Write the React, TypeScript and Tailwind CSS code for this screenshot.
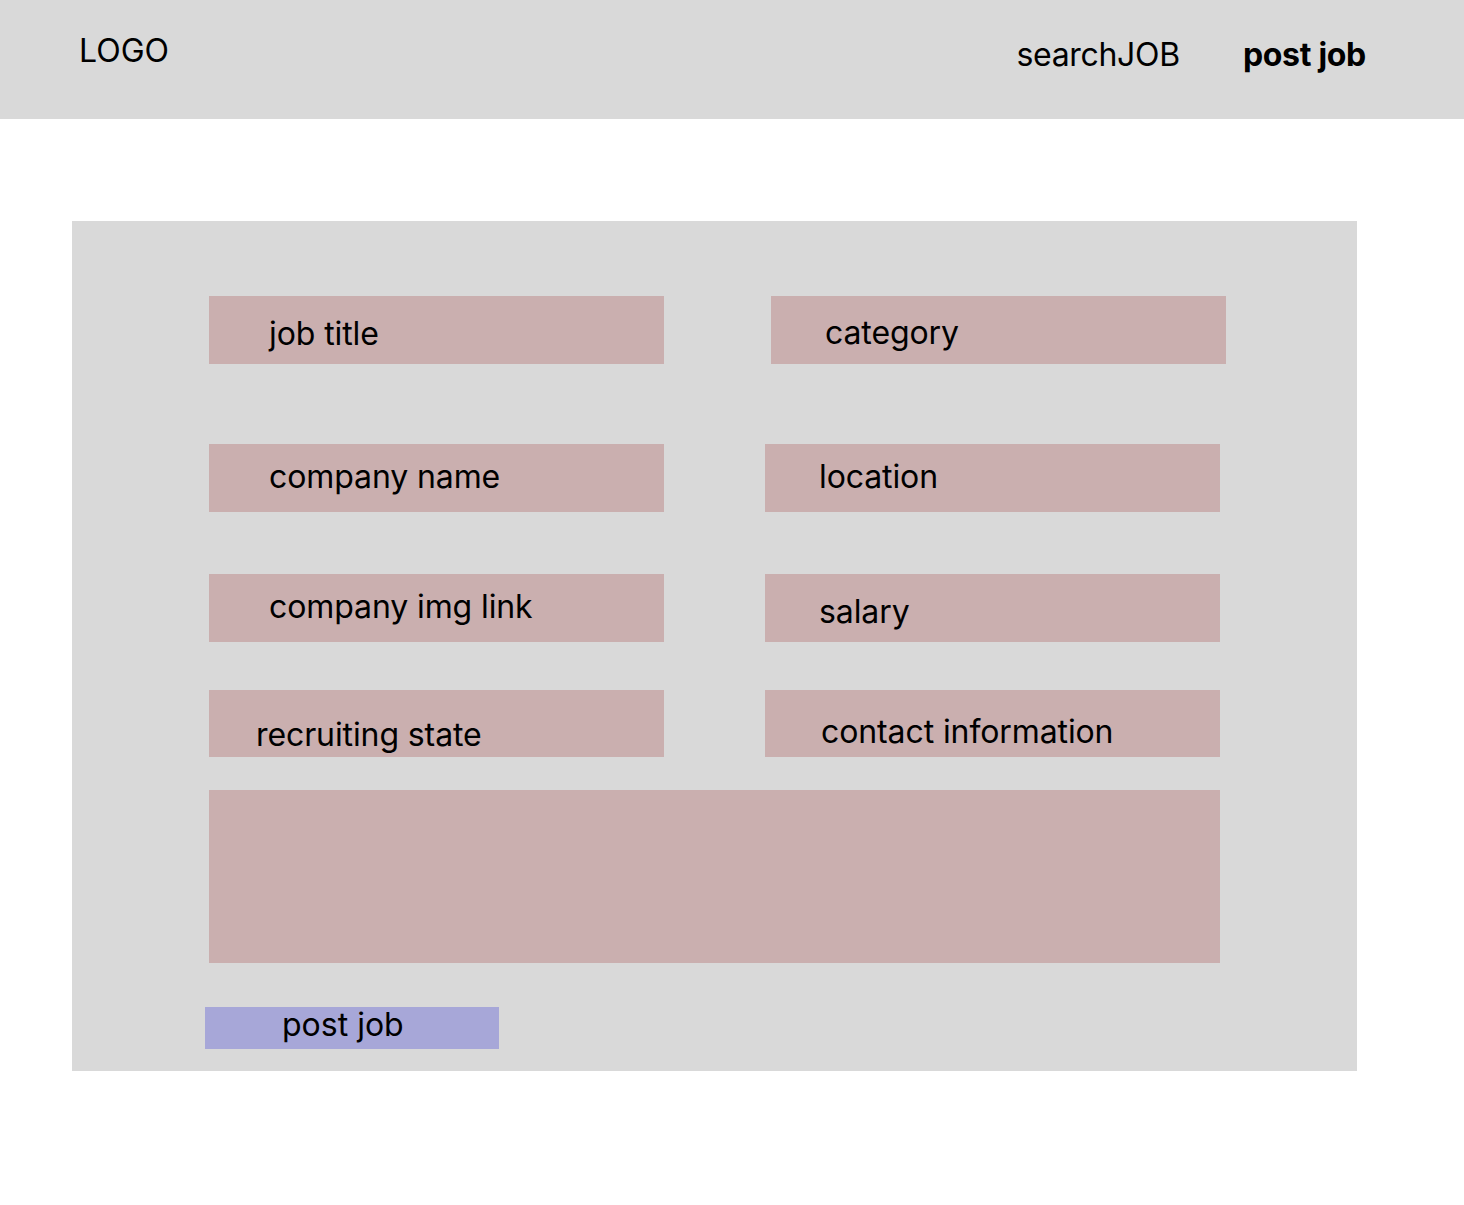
const font = { fontFamily: "Inter, 'Noto Sans', sans-serif" };

function Field({ label, className, textClass }: { label: string; className: string; textClass: string }) {
  return (
    <div className={`bg-[#caafaf] ${className}`}>
      <div className={`text-[32px] leading-[39px] tracking-[-0.1px] text-black whitespace-nowrap ${textClass}`}>{label}</div>
    </div>
  );
}

export default function App() {
  return (
    <div className="min-h-[1205px] w-[1464px] bg-white" style={font}>
      {/* Header */}
      <header className="flex h-[119px] items-start justify-between bg-[#d9d9d9] pl-[79px] pr-[98px]">
        <div className="pt-[31px] text-[32px] leading-[39px] text-black">LOGO</div>
        <nav className="flex gap-[63px] pt-[35px] text-[32px] leading-[39px] text-black">
          <span className="tracking-[-0.3px]">searchJOB</span>
          <span className="font-bold tracking-[-0.3px]">post job</span>
        </nav>
      </header>

      {/* Post job form */}
      <main className="pl-[72px] pt-[102px]">
        <div className="flex h-[850px] w-[1285px] flex-col bg-[#d9d9d9] pl-[137px] pt-[75px]">
          <div className="flex gap-[107px]">
            <Field label="job title" className="h-[68px] w-[455px]" textClass="pl-[60px] pt-[18px]" />
            <Field label="category" className="h-[68px] w-[455px]" textClass="pl-[54px] pt-[17px]" />
          </div>

          <div className="mt-[80px] flex gap-[101px]">
            <Field label="company name" className="h-[68px] w-[455px]" textClass="pl-[60px] pt-[13px]" />
            <Field label="location" className="h-[68px] w-[455px]" textClass="pl-[54px] pt-[13px]" />
          </div>

          <div className="mt-[62px] flex gap-[101px]">
            <Field label="company img link" className="h-[68px] w-[455px]" textClass="pl-[60px] pt-[13px]" />
            <Field label="salary" className="h-[68px] w-[455px]" textClass="pl-[54px] pt-[18px]" />
          </div>

          <div className="mt-[48px] flex gap-[101px]">
            <Field label="recruiting state" className="h-[67px] w-[455px]" textClass="pl-[47px] pt-[25px]" />
            <Field label="contact information" className="h-[67px] w-[455px]" textClass="pl-[56px] pt-[22px]" />
          </div>

          <div className="mt-[33px] h-[173px] w-[1011px] bg-[#caafaf]" />

          <button className="-ml-[4px] mt-[44px] flex h-[42px] w-[294px] items-start bg-[#a7a7d8] pl-[77px] text-left text-[32px] leading-[39px] text-black">
            <span className="-mt-[2px]">post job</span>
          </button>
        </div>
      </main>
    </div>
  );
}
